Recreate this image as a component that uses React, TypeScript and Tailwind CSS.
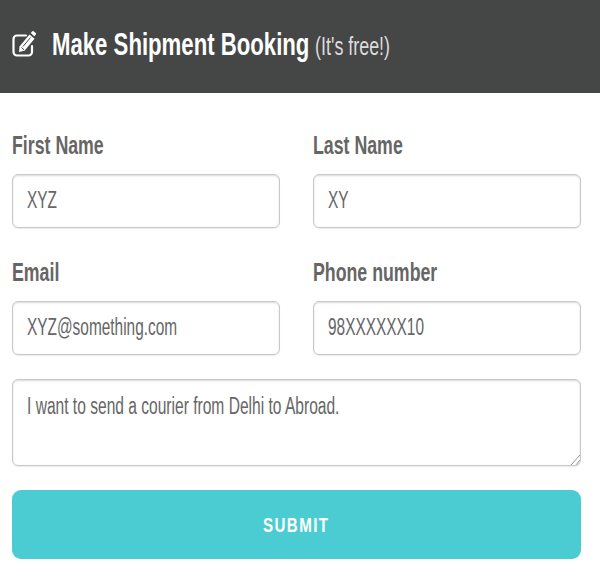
const fields = [
  { label: "First Name", value: "XYZ" },
  { label: "Last Name", value: "XY" },
  { label: "Email", value: "XYZ@something.com" },
  { label: "Phone number", value: "98XXXXXX10" },
]

function Narrow({ children, className = "" }: { children: React.ReactNode; className?: string }) {
  return <span className={`inline-block origin-left whitespace-nowrap ${className}`}>{children}</span>
}

function EditIcon() {
  return (
    <svg viewBox="0 0 24 26" className="w-[24px] h-[26px] shrink-0 mb-[6px]" fill="none" stroke="currentColor">
      <path strokeWidth={2.2} strokeLinecap="round" d="M14 4.500H5a3.500 3.500 0 0 0-3.500 3.500v13A3.500 3.500 0 0 0 5 24.500h11.500a3.500 3.500 0 0 0 3.500-3.500V15" />
      <path fill="currentColor" stroke="none" d="M7.500 15.500L17.500 3.500l5 4.200-10 12-5.500 1.300z" />
      <path fill="currentColor" stroke="none" d="M18.800 2l1.500-1.700q.6-.6 1.300 0l2.100 1.800q.6.6.1 1.300L22.300 5.200z" />
      <path stroke="#454646" strokeWidth={1} d="M9.500 16.500l2.500 2.200M11 15.500L18.500 6.500" />
    </svg>
  )
}

export default function App() {
  return (
    <div className="w-[600px] h-[578px] bg-white overflow-hidden font-['Liberation_Sans',sans-serif]">
      {/* Header */}
      <div className="h-[93px] bg-[#454646] flex items-center pl-[12px] text-white">
        <EditIcon />
        <Narrow className="ml-[16px] mb-[2px] scale-x-[0.715]">
          <span className="text-[31px] leading-none font-bold">Make Shipment Booking</span>
          <span className="ml-[8px] text-[25px] leading-none text-[#dcdcdc]">(It's free!)</span>
        </Narrow>
      </div>

      {/* Form */}
      <form className="pl-[12px] pr-[19px] pt-[38px]">
        <div className="grid grid-cols-2 gap-x-[33px] gap-y-[30px]">
          {fields.map((field) => (
            <div key={field.label}>
              <div className="h-[29px] text-[25px] leading-[29px] font-bold text-[#666666]">
                <Narrow className="scale-x-[0.71]">{field.label}</Narrow>
              </div>
              <div className="mt-[14px] h-[54px] pl-[14px] pb-[2px] flex items-center border border-[#c9c9c9] rounded-[6px] shadow-[inset_0_1px_2px_rgba(0,0,0,0.15),0_1px_1px_rgba(0,0,0,0.08)] text-[23px] text-[#666666] overflow-hidden">
                <Narrow className="scale-x-[0.67]">{field.value}</Narrow>
              </div>
            </div>
          ))}
        </div>
        <div className="relative mt-[24px] h-[87px] pl-[14px] pt-[12px] border border-[#c9c9c9] rounded-[6px] shadow-[inset_0_1px_2px_rgba(0,0,0,0.15),0_1px_1px_rgba(0,0,0,0.08)] text-[23px] leading-[28px] text-[#666666] overflow-hidden">
          <Narrow className="scale-x-[0.677]">I want to send a courier from Delhi to Abroad.</Narrow>
          <svg viewBox="0 0 10 10" className="absolute right-0 bottom-0 w-[10px] h-[10px]" stroke="#777777" strokeWidth={0.8}>
            <path d="M1 10L10 0M6 10L10 5" />
          </svg>
        </div>
        <button
          type="button"
          className="mt-[24px] block w-full h-[69px] rounded-[9px] bg-[#4bccd2] text-white text-[21px] font-bold tracking-[2px]"
        >
          <span className="inline-block scale-x-[0.72]">SUBMIT</span>
        </button>
      </form>
    </div>
  )
}
